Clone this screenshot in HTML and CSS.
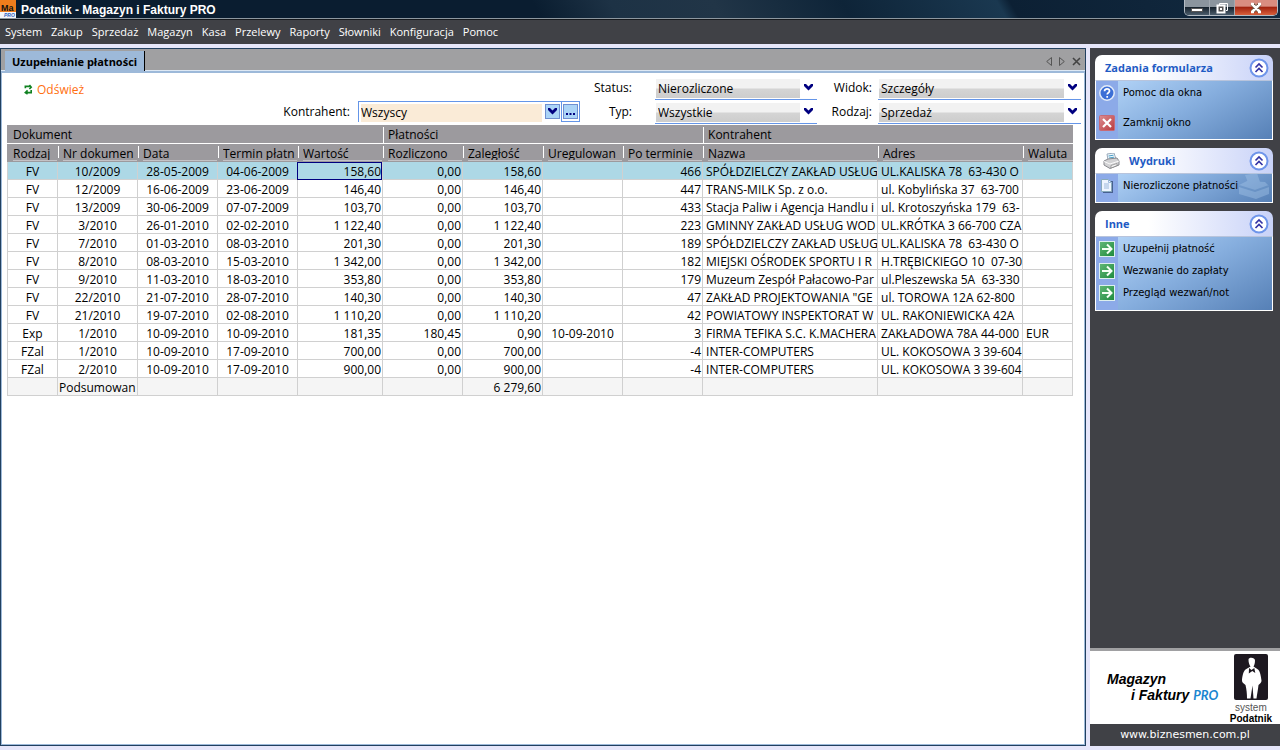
FILE: index.html
```html
<!DOCTYPE html>
<html lang="pl">
<head>
<meta charset="utf-8">
<title>Podatnik - Magazyn i Faktury PRO</title>
<link rel="stylesheet" href="styles.css">
</head>
<body>
<svg class="defs" aria-hidden="true">
  <defs>
    <linearGradient id="green" x1="0" y1="0" x2="1" y2="1"><stop offset="0" stop-color="#62b878"/><stop offset="1" stop-color="#1d8a3c"/></linearGradient>
    <linearGradient id="red" x1="0" y1="0" x2="1" y2="1"><stop offset="0" stop-color="#dc8d92"/><stop offset="1" stop-color="#b93a3c"/></linearGradient>
    <symbol id="chevron" viewBox="0 0 9 7"><path d="M0 0h2l2.500 2.500L7 0h2v2L4.500 6.500 0 2z" fill="#000080"/></symbol>
    <symbol id="collapse" viewBox="0 0 20 20"><circle cx="10" cy="10" r="8.500" fill="#fff" stroke="#6e95ea" stroke-width="2"/><path d="M6.500 9.500L10 6l3.500 3.500M6.500 14L10 10.500l3.500 3.500" fill="none" stroke="#3434a4" stroke-width="1.700"/></symbol>
    <symbol id="arrow" viewBox="0 0 16 16"><rect x=".5" y=".5" width="15" height="15" fill="url(#green)" stroke="#dcefee"/><path d="M3 8h9M8 3.500L12.500 8 8 12.500" fill="none" stroke="#f4fff4" stroke-width="2"/></symbol>
  </defs>
</svg>

<header class="titlebar">
  <svg class="app-icon" viewBox="0 0 16 18"><rect width="16" height="18" fill="#f5f5f8"/><rect width="16" height="12" fill="#ef7d1c"/><text x="1" y="11" class="icon-ma">Ma</text><text x="4" y="17" class="icon-pro">PRO</text></svg>
  <h1>Podatnik - Magazyn i Faktury PRO</h1>
  <div class="window-buttons">
    <button aria-label="Minimalizuj"><svg width="12" height="14" viewBox="0 0 12 14"><rect x=".5" y="7.500" width="11" height="3" fill="#fff" stroke="#555"/></svg></button>
    <button aria-label="Przywróć"><svg width="12" height="14" viewBox="0 0 12 14"><path d="M3.500 4V2.500h8v7H10" fill="none" stroke="#fff"/><rect x="1.500" y="4.500" width="7" height="7" fill="#555" stroke="#fff" stroke-width="2"/><rect x="4" y="7" width="2" height="2" fill="#fff"/></svg></button>
    <button class="close" aria-label="Zamknij"><svg width="12" height="14" viewBox="0 0 12 14"><path d="M2 3l8 8M10 3l-8 8" stroke="#654" stroke-width="4"/><path d="M2 3l8 8M10 3l-8 8M1 3h3M8 3h3M1 11h3M8 11h3" stroke="#fff" stroke-width="2.500"/></svg></button>
  </div>
</header>

<nav class="menu">
  <a href="#">System</a><a href="#">Zakup</a><a href="#">Sprzedaż</a><a href="#">Magazyn</a><a href="#">Kasa</a><a href="#">Przelewy</a><a href="#">Raporty</a><a href="#">Słowniki</a><a href="#">Konfiguracja</a><a href="#">Pomoc</a>
</nav>

<div class="workspace">
  <main class="panel">
    <div class="tabbar">
      <button class="tab">Uzupełnianie płatności</button>
      <div class="tab-tools">
        <button aria-label="Poprzednia"><svg width="6" height="9" viewBox="0 0 6 9"><path d="M5.500.5v8L.7 4.500z" fill="none" stroke="#555"/></svg></button>
        <button aria-label="Następna"><svg width="6" height="9" viewBox="0 0 6 9"><path d="M.5.5v8l4.800-4z" fill="none" stroke="#555"/></svg></button>
        <button aria-label="Zamknij kartę"><svg width="9" height="9" viewBox="0 0 9 9"><path d="M1 1l7 7M8 1L1 8" stroke="#444" stroke-width="1.600"/></svg></button>
      </div>
    </div>

    <form class="filters">
      <button type="button" class="refresh"><svg width="9" height="11" viewBox="0 0 10 11"><path d="M1.500 4V2h5M6 .5L8 3 6 5M8 6v3H3M4 6.500L1.500 9 4 10.500" fill="none" stroke="#118222" stroke-width="1.800"/></svg>Odśwież</button>
      <label class="l-kon" for="kon">Kontrahent:</label>
      <div class="combo">
        <span class="combo-field"><input id="kon" value="Wszyscy"><button type="button" aria-label="Rozwiń"><svg width="9" height="7"><use href="#chevron"/></svg></button></span>
        <span class="combo-more"><button type="button" aria-label="Wybierz"><svg width="9" height="9" viewBox="0 0 9 9"><path d="M0 6h2v2H0zM3.500 6h2v2h-2zM7 6h2v2H7z" fill="#000080"/></svg></button></span>
      </div>
      <label class="l-st" for="st">Status:</label>
      <span class="select s-st"><select id="st"><option>Nierozliczone</option></select><svg width="9" height="7"><use href="#chevron"/></svg></span>
      <label class="l-typ" for="typ">Typ:</label>
      <span class="select s-typ"><select id="typ"><option>Wszystkie</option></select><svg width="9" height="7"><use href="#chevron"/></svg></span>
      <label class="l-wid" for="wid">Widok:</label>
      <span class="select s-wid"><select id="wid"><option>Szczegóły</option></select><svg width="9" height="7"><use href="#chevron"/></svg></span>
      <label class="l-rodz" for="rodz">Rodzaj:</label>
      <span class="select s-rodz"><select id="rodz"><option>Sprzedaż</option></select><svg width="9" height="7"><use href="#chevron"/></svg></span>
    </form>

    <div class="grid">
    <table>
      <colgroup><col class="w50"><col class="w80"><col class="w80"><col class="w80"><col class="w85"><col class="w80"><col class="w80"><col class="w80"><col class="w80"><col class="w175"><col class="w145"><col class="w51"></colgroup>
      <thead>
        <tr class="groups"><th colspan="5">Dokument</th><th colspan="4">Płatności</th><th colspan="3">Kontrahent</th></tr>
        <tr class="cols"><th><div>Rodzaj</div></th><th><div>Nr dokumen</div></th><th><div>Data</div></th><th><div>Termin płatn</div></th><th><div>Wartość</div></th><th><div>Rozliczono</div></th><th><div>Zaległość</div></th><th><div>Uregulowan</div></th><th><div>Po terminie</div></th><th><div>Nazwa</div></th><th><div>Adres</div></th><th><div>Waluta</div></th></tr>
      </thead>
      <tbody>
        <tr class="selected"><td>FV</td><td>10/2009</td><td>28-05-2009</td><td>04-06-2009</td><td class="current">158,60</td><td>0,00</td><td>158,60</td><td></td><td>466</td><td>SPÓŁDZIELCZY ZAKŁAD USŁUG</td><td>UL.KALISKA 78&nbsp; 63-430 O</td><td></td></tr>
        <tr><td>FV</td><td>12/2009</td><td>16-06-2009</td><td>23-06-2009</td><td>146,40</td><td>0,00</td><td>146,40</td><td></td><td>447</td><td>TRANS-MILK Sp. z o.o.</td><td>ul. Kobylińska 37&nbsp; 63-700</td><td></td></tr>
        <tr><td>FV</td><td>13/2009</td><td>30-06-2009</td><td>07-07-2009</td><td>103,70</td><td>0,00</td><td>103,70</td><td></td><td>433</td><td>Stacja Paliw i Agencja Handlu i</td><td>ul. Krotoszyńska 179&nbsp; 63-</td><td></td></tr>
        <tr><td>FV</td><td>3/2010</td><td>26-01-2010</td><td>02-02-2010</td><td>1 122,40</td><td>0,00</td><td>1 122,40</td><td></td><td>223</td><td>GMINNY ZAKŁAD USŁUG WOD</td><td>UL.KRÓTKA 3 66-700 CZA</td><td></td></tr>
        <tr><td>FV</td><td>7/2010</td><td>01-03-2010</td><td>08-03-2010</td><td>201,30</td><td>0,00</td><td>201,30</td><td></td><td>189</td><td>SPÓŁDZIELCZY ZAKŁAD USŁUG</td><td>UL.KALISKA 78&nbsp; 63-430 O</td><td></td></tr>
        <tr><td>FV</td><td>8/2010</td><td>08-03-2010</td><td>15-03-2010</td><td>1 342,00</td><td>0,00</td><td>1 342,00</td><td></td><td>182</td><td>MIEJSKI OŚRODEK SPORTU I R</td><td>H.TRĘBICKIEGO 10&nbsp; 07-30</td><td></td></tr>
        <tr><td>FV</td><td>9/2010</td><td>11-03-2010</td><td>18-03-2010</td><td>353,80</td><td>0,00</td><td>353,80</td><td></td><td>179</td><td>Muzeum Zespół Pałacowo-Par</td><td>ul.Pleszewska 5A&nbsp; 63-330</td><td></td></tr>
        <tr><td>FV</td><td>22/2010</td><td>21-07-2010</td><td>28-07-2010</td><td>140,30</td><td>0,00</td><td>140,30</td><td></td><td>47</td><td>ZAKŁAD PROJEKTOWANIA "GE</td><td>ul. TOROWA 12A 62-800</td><td></td></tr>
        <tr><td>FV</td><td>21/2010</td><td>19-07-2010</td><td>02-08-2010</td><td>1 110,20</td><td>0,00</td><td>1 110,20</td><td></td><td>42</td><td>POWIATOWY INSPEKTORAT W</td><td>UL. RAKONIEWICKA 42A</td><td></td></tr>
        <tr><td>Exp</td><td>1/2010</td><td>10-09-2010</td><td>10-09-2010</td><td>181,35</td><td>180,45</td><td>0,90</td><td>10-09-2010</td><td>3</td><td>FIRMA TEFIKA S.C. K.MACHERA</td><td>ZAKŁADOWA 78A 44-000</td><td>EUR</td></tr>
        <tr><td>FZal</td><td>1/2010</td><td>10-09-2010</td><td>17-09-2010</td><td>700,00</td><td>0,00</td><td>700,00</td><td></td><td>-4</td><td>INTER-COMPUTERS</td><td>UL. KOKOSOWA 3 39-604</td><td></td></tr>
        <tr><td>FZal</td><td>2/2010</td><td>10-09-2010</td><td>17-09-2010</td><td>900,00</td><td>0,00</td><td>900,00</td><td></td><td>-4</td><td>INTER-COMPUTERS</td><td>UL. KOKOSOWA 3 39-604</td><td></td></tr>
      </tbody>
      <tfoot>
        <tr><td></td><td>Podsumowan</td><td></td><td></td><td></td><td></td><td>6 279,60</td><td></td><td></td><td></td><td></td><td></td></tr>
      </tfoot>
    </table>
    </div>
  </main>

  <aside class="sidebar">
    <div class="tasks">
      <section class="card roomy">
        <h2>Zadania formularza<button aria-label="Zwiń"><svg width="20" height="20"><use href="#collapse"/></svg></button></h2>
        <ul>
          <li><a href="#"><svg width="16" height="16" viewBox="0 0 16 16"><circle cx="8" cy="8" r="7.200" fill="#3c6fd6" stroke="#e4ecf8" stroke-width="1.500"/><path d="M5.500 6.200C5.500 3 10.500 3.200 10.500 6c0 1.800-2.300 1.700-2.300 3.600M8.200 11v1.800" fill="none" stroke="#fff" stroke-width="1.700"/></svg>Pomoc dla okna</a></li>
          <li><a href="#"><svg width="16" height="16" viewBox="0 0 16 16"><rect x=".5" y=".5" width="15" height="15" rx="1" fill="url(#red)" stroke="#c66a78"/><path d="M4 4l8 8M12 4l-8 8" stroke="#fff" stroke-width="2.200"/></svg>Zamknij okno</a></li>
        </ul>
      </section>
      <section class="card prints">
        <h2><svg class="printer" width="17" height="16" viewBox="0 0 17 16"><path d="M4 1l7-1 2 6-8 1z" fill="#f2f7fb" stroke="#9ab"/><path d="M5.500 3l5-.8M6 5l5-.8" stroke="#4aa0c8"/><path d="M1 8l4-2 9-1 2 3v4l-9 3.500L1 12z" fill="#d2d2d4" stroke="#88898e"/><path d="M1 8.500l6 2.500 9-3" fill="none" stroke="#fafafa"/><path d="M8 12.500l6-2v2L8 15z" fill="#f8f8f8" stroke="#777" stroke-width=".6"/></svg>Wydruki<button aria-label="Zwiń"><svg width="20" height="20"><use href="#collapse"/></svg></button></h2>
        <svg class="watermark" width="34" height="28" viewBox="0 0 34 28"><path d="M8 2l12-2 3 9-11 3zM2 12l8-4 18 1 4 4v8l-13 5L2 21z" fill="#a8c8ea"/><path d="M2 13l16 5 14-5" fill="none" stroke="#6f98c8" stroke-width="2"/></svg>
        <ul>
          <li><a href="#"><svg width="16" height="16" viewBox="0 0 16 16"><path d="M4 3h10v12H4z" fill="#486090"/><path d="M2.500 1.500h7l3 3v9h-10z" fill="#eef5ff" stroke="#8ab"/><path d="M9.500 1.500v3h3M5 6h5M5 8h5M5 10h5" fill="none" stroke="#9db9dc"/></svg>Nierozliczone płatności</a></li>
        </ul>
      </section>
      <section class="card other">
        <h2>Inne<button aria-label="Zwiń"><svg width="20" height="20"><use href="#collapse"/></svg></button></h2>
        <ul>
          <li><a href="#"><svg width="16" height="16"><use href="#arrow"/></svg>Uzupełnij płatność</a></li>
          <li><a href="#"><svg width="16" height="16"><use href="#arrow"/></svg>Wezwanie do zapłaty</a></li>
          <li><a href="#"><svg width="16" height="16"><use href="#arrow"/></svg>Przegląd wezwań/not</a></li>
        </ul>
      </section>
    </div>
    <div class="brand">
      <p class="product">Magazyn<br><span class="second">i Faktury <span class="pro">PRO</span></span></p>
      <div class="vendor">
        <svg width="34" height="46" viewBox="0 0 34 46"><rect width="34" height="46" rx="2" fill="#1d1820"/><path d="M14.500 5.500c0-2.500 6.500-2.500 6.500 1 0 3-.8 5-1.500 6l4.500 3c2 1.500 3 7 3.500 11 .2 2-1.500 3-3 4.500-.5 5-1.500 9-2 13.500h-3l-1-13-2 13h-3.500c0-5-.5-9-1.500-13.500-2-1.500-4-3-3.500-5.500.5-4 1.500-8.500 3.500-10l5-3c-1.200-1.500-2-4-2-7z" fill="#fff"/><path d="M15 14l2.500 2 2.800-2 1 5-3-2-3.500 2.500z" fill="#1d1820"/></svg>
        <span class="system">system</span><strong>Podatnik</strong>
      </div>
    </div>
    <a class="site" href="#">www.biznesmen.com.pl</a>
  </aside>
</div>
</body>
</html>
```
FILE: styles.css
```css
* { box-sizing: border-box; }
body {
  margin: 0;
  min-height: 100vh;
  display: flex;
  flex-direction: column;
  background: #e6e6fa;
  color: #000;
  font: 12px/18px "Open Sans", "Noto Sans", sans-serif;
}
button, input, select { font: inherit; color: inherit; margin: 0; padding: 0; border: 0; background: none; }
a { color: inherit; text-decoration: none; }
h1, h2, p, ul { margin: 0; padding: 0; list-style: none; }
svg { display: block; flex: none; }
.defs { position: absolute; width: 0; height: 0; }

.titlebar {
  display: flex;
  align-items: center;
  gap: 5px;
  height: 20px;
  padding-right: 2px;
  border-bottom: 1px solid #15181c;
  box-shadow: inset 0 -1px #8d979f;
  background: linear-gradient(60deg, #0a1d30 0 42%, #1d3245 48%, #213547 56%, #0e2438 66%, #1a3850 78%, #0c2034 79%, #122a40 100%);
}
.app-icon { width: 16px; height: 18px; align-self: flex-start; }
.icon-ma { font: bold 9px "Liberation Sans", sans-serif; fill: #111; }
.icon-pro { font: italic bold 5px "Liberation Sans", sans-serif; fill: #2b5fc0; }
.titlebar h1 { flex: 1; color: #fff; font: bold 12px/18px "Liberation Sans", sans-serif; }
.window-buttons {
  display: flex;
  align-self: flex-start;
  border: 1px solid #b4bcc4;
  border-top: 0;
  border-radius: 0 0 5px 5px;
  overflow: hidden;
}
.window-buttons button {
  display: grid;
  place-items: center;
  width: 25px;
  height: 15px;
  border-right: 1px solid #a0a8b0;
  background: linear-gradient(#8b959e 0 45%, #17242f 50%, #4c5d6c);
}
.window-buttons .close { width: 42px; border: 0; background: linear-gradient(#d98d80 0 40%, #a32410 50%, #d8603c); }

.menu { display: flex; gap: 9px; height: 24px; padding-left: 5px; background: #404146; color: #fff; font: 11px/24px "Open Sans", "Noto Sans", sans-serif; }

.workspace { flex: 1; display: flex; gap: 4px; padding: 4px 0; }
.panel { flex: 1; min-width: 0; border: 1px solid #22405f; box-shadow: inset -1px -1px #9db9d9, inset 1px 0 #9db9d9; background: #fff; }
.tabbar {
  display: flex;
  justify-content: space-between;
  height: 24px;
  padding: 2px 4px 0;
  background: #a0a0a2;
  border-bottom: 2px solid #9db9d9;
  box-shadow: inset 0 -1px #dde8f4;
}
.tab { padding: 2px 7px 0; border-right: 1px solid #000; background: #9db9d9; font-size: 11px; font-weight: bold; line-height: 18px; }
.tab-tools { display: flex; align-items: center; gap: 7px; }

.filters {
  display: grid;
  grid-template-columns: 348px 230fr 52px 185fr 55px 209fr;
  grid-template-rows: 21px 21px;
  row-gap: 3px;
  align-items: center;
  padding: 6px 4px 1px 1px;
}
.filters label { align-self: start; text-align: right; line-height: 18px; }
.refresh { grid-area: 1 / 1; display: flex; align-items: center; gap: 4px; justify-self: start; padding-left: 22px; color: #ff7010; }
.l-kon { grid-area: 2 / 1; }
.combo { grid-area: 2 / 2; }
.l-st { grid-area: 1 / 3; }
.l-typ { grid-area: 2 / 3; }
.s-st { grid-area: 1 / 4; }
.s-typ { grid-area: 2 / 4; }
.l-wid { grid-area: 1 / 5; }
.l-rodz { grid-area: 2 / 5; }
.s-wid { grid-area: 1 / 6; }
.s-rodz { grid-area: 2 / 6; }
.s-st, .s-typ { margin-left: 23px; }
.s-wid, .s-rodz { margin-left: 6px; }
.select { position: relative; display: flex; height: 21px; padding: 0 17px 1px 1px; border-bottom: 1px solid #6495e8; }
.select select { appearance: none; width: 100%; padding-left: 2px; background: linear-gradient(#f2f2f2 0 45%, #d4d4d4 55%, #cdcdcd); outline: 0; }
.select svg { position: absolute; right: 4px; top: 5px; }
.combo { display: flex; align-self: end; height: 23px; margin-left: 8px; padding-bottom: 2px; }
.combo-field { flex: 1; display: flex; gap: 3px; padding: 2px 1px 0 2px; border: 1px solid #6495e8; border-bottom: 0; border-right: 0; }
.combo input { flex: 1; min-width: 0; background: #faebd7; }
.combo button { display: grid; place-items: center; width: 15px; height: 15px; border: 1px solid #6f8fd0; background: #abd4f7; }
.combo-more { padding: 2px 1px; border: 1px solid #6495e8; }

.grid { padding: 0 12px 0 6px; }
table { width: 100%; table-layout: fixed; border-collapse: separate; border-spacing: 0; }
.w50 { width: 50px; }
.w51 { width: 51px; }
.w80 { width: 80px; }
.w85 { width: 85px; }
.w145 { width: 145px; }
.w175 { width: 175px; }
th {
  padding: 0 0 0 6px;
  font-weight: normal;
  text-align: left;
  white-space: nowrap;
  background: linear-gradient(#fff, #fff) 1px 2px / 1px 12px no-repeat #9c9a9e;
}
th:first-child { background: #9c9a9e; }
.groups th { height: 19px; padding-top: 2px; border-bottom: 1px solid #fff; line-height: 16px; background-size: 1px 16px; }
.cols th { height: 18px; border-bottom: 1px solid #9c9a9e; }
.cols div { height: 17px; overflow: hidden; line-height: 19px; border-bottom: 1px solid #c4c2c6; }
td {
  height: 18px;
  padding: 2px 1px 0 3px;
  border: solid #d0d0d0;
  border-width: 0 0 1px 1px;
  line-height: 15px;
  white-space: nowrap;
  overflow: hidden;
}
td:last-child { border-right-width: 1px; }
td:nth-child(-n+4), td:nth-child(8) { padding-left: 1px; text-align: center; }
td:nth-child(5), td:nth-child(6), td:nth-child(7), td:nth-child(9) { text-align: right; }
.selected td { background: #add8e6; }
.selected .current { outline: 1px solid #000080; outline-offset: -1px; }
tfoot td { background: #f5f5f5; }
tfoot td:nth-child(2) { text-align: left; }

.sidebar { width: 190px; display: flex; flex-direction: column; background: #404146; }
.tasks { flex: 1; display: flex; flex-direction: column; gap: 8px; padding: 7px 7px 8px 5px; }
.card { position: relative; }
.card h2 {
  display: flex;
  align-items: center;
  height: 25px;
  padding: 0 4px 0 10px;
  border-radius: 7px 7px 0 0;
  background: linear-gradient(90deg, #fff 30%, #c8d2f8);
  color: #1f5bc4;
  font: bold 11px/25px "Open Sans", "Noto Sans", sans-serif;
}
.card h2 button { margin-left: auto; }
.card .printer { margin: 0 9px 0 -2px; }
.card ul {
  border: 1px solid #fff;
  border-top: 1px solid #b8c4dc;
  background: linear-gradient(90deg, #8caae8 22px, transparent 22px), linear-gradient(150deg, #b8d8fa, #86aede 50%, #5680b6);
}
.card a { display: flex; align-items: center; gap: 8px; height: 22px; padding-left: 3px; font: 10px/22px "DejaVu Sans", sans-serif; }
.roomy ul { height: 60px; }
.roomy li:first-child a { height: 24px; }
.roomy li:last-child a { height: 36px; }
.prints ul { height: 30px; }
.prints a { height: 24px; }
.other ul { padding: 1px 0 6px; }
.watermark { position: absolute; right: 2px; bottom: 2px; opacity: .4; }

.brand {
  display: flex;
  justify-content: space-between;
  padding: 3px 8px 0 17px;
  height: 76px;
  border-top: 3px solid #a0a0a2;
  background: #fff;
  font: 10px/11px "Liberation Sans", sans-serif;
}
.product { padding-top: 17px; font: italic bold 14px/16px "Liberation Sans", sans-serif; white-space: nowrap; }
.second { padding-left: 24px; }
.pro { color: #1a86d0; font: italic bold 13px/16px Lato, sans-serif; }
.vendor { display: flex; flex-direction: column; align-items: center; }
.system { padding-top: 2px; color: #555; }
.site { height: 22px; color: #fff; text-align: center; font: 11px/22px "DejaVu Sans", sans-serif; }
```
